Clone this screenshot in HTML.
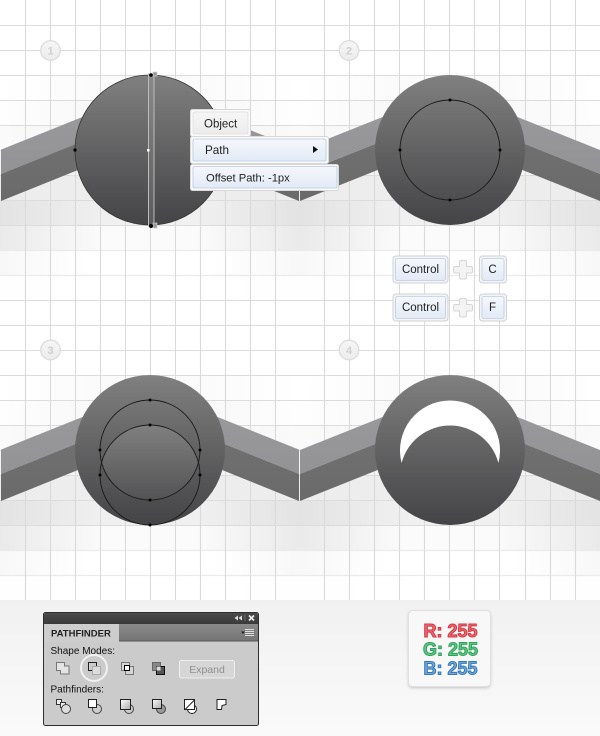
<!DOCTYPE html>
<html><head><meta charset="utf-8"><style>
html,body{margin:0;padding:0;width:600px;height:736px;overflow:hidden;background:#fff}
svg{display:block}
text{font-family:"Liberation Sans",sans-serif}
</style></head><body>
<svg width="600" height="736" viewBox="0 0 600 736" xmlns="http://www.w3.org/2000/svg">
<defs>
<linearGradient id="r1"><stop offset="0" stop-color="#fff"/><stop offset=".3" stop-color="#fbfbfb"/><stop offset=".7" stop-color="#fbfbfb"/><stop offset="1" stop-color="#fff"/></linearGradient>
<linearGradient id="r2"><stop offset="0" stop-color="#fefefe"/><stop offset=".25" stop-color="#f9f9f9"/><stop offset=".75" stop-color="#f9f9f9"/><stop offset="1" stop-color="#fefefe"/></linearGradient>
<linearGradient id="r3"><stop offset="0" stop-color="#fafafa"/><stop offset=".25" stop-color="#f6f6f6"/><stop offset=".75" stop-color="#f6f6f6"/><stop offset="1" stop-color="#fafafa"/></linearGradient>
<linearGradient id="r4"><stop offset="0" stop-color="#f4f4f4"/><stop offset="1" stop-color="#f4f4f4"/></linearGradient>
<linearGradient id="r5"><stop offset="0" stop-color="#ededed"/><stop offset="1" stop-color="#ededed"/></linearGradient>
<linearGradient id="r6"><stop offset="0" stop-color="#e3e3e3"/><stop offset=".35" stop-color="#f0f0f0"/><stop offset=".65" stop-color="#f0f0f0"/><stop offset="1" stop-color="#e3e3e3"/></linearGradient>
<linearGradient id="r7"><stop offset="0" stop-color="#eaeaea"/><stop offset=".35" stop-color="#fbfbfb"/><stop offset=".65" stop-color="#fbfbfb"/><stop offset="1" stop-color="#eaeaea"/></linearGradient>
<linearGradient id="r8"><stop offset="0" stop-color="#f8f8f8"/><stop offset=".3" stop-color="#fff"/><stop offset=".7" stop-color="#fff"/><stop offset="1" stop-color="#f8f8f8"/></linearGradient>
<linearGradient id="r9"><stop offset="0" stop-color="#fefefe"/><stop offset=".3" stop-color="#fff"/><stop offset=".7" stop-color="#fff"/><stop offset="1" stop-color="#fefefe"/></linearGradient>
<linearGradient id="ci" x1="0" y1="0" x2="0" y2="1"><stop offset="0" stop-color="#808080"/><stop offset="1" stop-color="#444446"/></linearGradient>
<linearGradient id="lt" x1="0" y1="0" x2="0" y2="1"><stop offset="0" stop-color="#9b9b9e"/><stop offset="1" stop-color="#939396"/></linearGradient>
<linearGradient id="dk" x1="0" y1="0" x2="0" y2="1"><stop offset="0" stop-color="#737373"/><stop offset="1" stop-color="#6a6a6a"/></linearGradient>
<linearGradient id="bar" x1="0" y1="0" x2="0" y2="1"><stop offset="0" stop-color="#8a8a8a"/><stop offset="1" stop-color="#5a5a5a"/></linearGradient>
<linearGradient id="bl" x1="0" y1="0" x2="0" y2="1"><stop offset="0" stop-color="#f5f8fc"/><stop offset="1" stop-color="#e2eaf6"/></linearGradient>
<linearGradient id="gr" x1="0" y1="0" x2="0" y2="1"><stop offset="0" stop-color="#f6f6f6"/><stop offset="1" stop-color="#ececec"/></linearGradient>
<linearGradient id="bot" x1="0" y1="0" x2="0" y2="1"><stop offset="0" stop-color="#f2f1f1"/><stop offset="1" stop-color="#fafafa"/></linearGradient>
<linearGradient id="ttl" x1="0" y1="0" x2="0" y2="1"><stop offset="0" stop-color="#4a4a4a"/><stop offset="1" stop-color="#3a3a3a"/></linearGradient>
<linearGradient id="tb" x1="0" y1="0" x2="0" y2="1"><stop offset="0" stop-color="#8a8a8a"/><stop offset="1" stop-color="#757575"/></linearGradient>
<linearGradient id="ic" x1="0" y1="0" x2="1" y2="1"><stop offset="0" stop-color="#fff"/><stop offset="1" stop-color="#aaa"/></linearGradient>
<linearGradient id="bd" x1="0" y1="0" x2="0" y2="1"><stop offset="0" stop-color="#f6f6f6"/><stop offset="1" stop-color="#ececec"/></linearGradient>
<filter id="sh" x="-20%" y="-20%" width="140%" height="140%"><feGaussianBlur stdDeviation="1.500"/></filter>
<clipPath id="lens"><circle cx="150" cy="450" r="50"/></clipPath>
<g id="bg">
<rect y="75" width="300" height="25" fill="url(#r1)"/>
<rect y="100" width="300" height="25" fill="url(#r2)"/>
<rect y="125" width="300" height="25" fill="url(#r3)"/>
<rect y="150" width="300" height="25" fill="url(#r4)"/>
<rect y="175" width="300" height="25" fill="url(#r5)"/>
<rect y="200" width="300" height="25" fill="url(#r6)"/>
<rect y="225" width="300" height="25" fill="url(#r7)"/>
<rect y="250" width="300" height="25" fill="url(#r8)"/>
<rect y="275" width="300" height="25" fill="url(#r9)"/>
</g>
<g id="rib">
<path d="M1 149.600 L150 90 L299 149.600 V174 L150 114 L1 174Z" fill="url(#lt)"/>
<path d="M1 174 L150 114 L299 174 V201 L150 141 L1 201Z" fill="url(#dk)"/>
</g>
<g id="rib2">
<path d="M0 150 L150 90 L300 150 V174 L150 114 L0 174Z" fill="url(#lt)"/>
<path d="M0 174 L150 114 L300 174 V201 L150 141 L0 201Z" fill="url(#dk)"/>
</g>
</defs>

<rect width="600" height="600" fill="#fff"/>
<use href="#bg"/><use href="#bg" x="300"/><use href="#bg" y="300"/><use href="#bg" x="300" y="300"/>

<g fill="none">
<path stroke="#dcdcdc" stroke-width="1.100" d="M0 25.500H600M0 50.500H600M0 75.500H600M0 100.500H600M0 125.500H600M0 150.500H600M0 175.500H600M0 200.500H600M0 225.500H600M0 300.500H600M0 325.500H600M0 350.500H600M0 375.500H600M0 400.500H600M0 425.500H600M0 450.500H600M0 475.500H600M0 500.500H600M0 525.500H600"/>
<path stroke="#ebebeb" stroke-width="1.200" d="M0 250.500H600M0 275.500H600M0 550.500H600M0 575.500H600"/>
<g stroke="#dadada" stroke-width="1.100">
<path d="M25.500 0V600M50.500 0V600M75.500 0V600M100.500 0V600M125.500 0V600M150.500 0V600M175.500 0V600M200.500 0V600M225.500 0V600M250.500 0V600M275.500 0V600"/>
<path d="M324.500 0V600M349.500 0V600M374.500 0V600M399.500 0V600M424.500 0V600M449.500 0V600M474.500 0V600M499.500 0V600M525.500 0V600M550.500 0V600M575.500 0V600"/>
</g>
</g>

<!-- ribbons -->
<use href="#rib"/><use href="#rib2" x="300"/><use href="#rib" y="300"/><use href="#rib2" x="300" y="300"/>

<!-- panel 1 -->
<circle cx="150" cy="150" r="75" fill="url(#ci)" stroke="#333" stroke-width=".8"/>
<rect x="148.500" y="74" width="5.500" height="152" fill="url(#bar)" stroke="#bbb" stroke-width="1"/>
<rect x="153" y="72" width="4" height="4" fill="#999" stroke="#ccc" stroke-width=".7"/>
<rect x="153" y="223" width="4" height="5" fill="#999" stroke="#ccc" stroke-width=".7"/>
<circle cx="151" cy="75" r="1.800" fill="#000"/><circle cx="151" cy="226" r="2" fill="#000"/>
<circle cx="75" cy="150" r="1.600" fill="#000"/>
<rect x="147" y="149" width="2.500" height="2.500" fill="#fff"/>

<!-- panel 2 -->
<circle cx="450" cy="150" r="75" fill="url(#ci)"/>
<circle cx="450" cy="150" r="50" fill="none" stroke="#1a1a1a" stroke-width=".9"/>
<g fill="#000"><circle cx="450" cy="100" r="1.500"/><circle cx="450" cy="200" r="1.500"/><circle cx="400" cy="150" r="1.500"/><circle cx="500" cy="150" r="1.500"/></g>

<!-- panel 3 -->
<circle cx="150" cy="450" r="75" fill="url(#ci)"/>
<g clip-path="url(#lens)"><circle cx="150" cy="475" r="50" fill="url(#ci)"/></g>
<circle cx="150" cy="450" r="50" fill="none" stroke="#1a1a1a" stroke-width=".9"/>
<circle cx="150" cy="475" r="50" fill="none" stroke="#1a1a1a" stroke-width=".9"/>
<g fill="#000"><circle cx="150" cy="400" r="1.500"/><circle cx="150" cy="425" r="1.500"/><circle cx="150" cy="500" r="1.500"/><circle cx="150" cy="525" r="1.500"/><circle cx="100" cy="450" r="1.500"/><circle cx="200" cy="450" r="1.500"/><circle cx="100" cy="475" r="1.500"/><circle cx="200" cy="475" r="1.500"/></g>

<!-- panel 4 -->
<circle cx="450" cy="450" r="75" fill="url(#ci)"/>
<path d="M401.600 463 A50 50 0 1 1 498.400 463 A50 50 0 0 0 401.600 463Z" fill="#fff"/>

<!-- badges -->
<g fill="url(#bd)" stroke="#dcdcdc" stroke-width="1.300">
<circle cx="50.500" cy="50.500" r="9.800"/><circle cx="349" cy="50.500" r="9.800"/><circle cx="50.500" cy="350" r="9.800"/><circle cx="349" cy="350" r="9.800"/>
</g>
<g fill="#cfcfcf" font-size="11" font-weight="bold" text-anchor="middle">
<text x="50.500" y="54.500">1</text><text x="349" y="54.500">2</text><text x="50.500" y="354">3</text><text x="349" y="354">4</text>
</g>

<!-- menu -->
<rect x="190.500" y="109.500" width="60" height="27" rx="2" fill="#fafafa" stroke="#d8d8d8"/>
<rect x="193" y="112" width="55" height="22" rx="1.500" fill="url(#gr)" stroke="#ddd" stroke-width=".7"/>
<text x="204" y="127.500" font-size="11.500" fill="#222">Object</text>
<rect x="190.500" y="136.500" width="138" height="27" rx="2" fill="#fafafa" stroke="#d8d8d8"/>
<rect x="193" y="139" width="133" height="22" rx="1.500" fill="url(#bl)" stroke="#b5c9e2" stroke-width=".8"/>
<text x="205" y="154" font-size="11.700" fill="#222">Path</text>
<path d="M313 146L318 149.500L313 153Z" fill="#111"/>
<rect x="190.500" y="164.500" width="148" height="26" rx="2" fill="#fafafa" stroke="#d8d8d8"/>
<rect x="193" y="166.500" width="144" height="21.500" rx="1.500" fill="url(#bl)" stroke="#b5c9e2" stroke-width=".8"/>
<text x="206" y="181.500" font-size="11.200" fill="#222">Offset Path: -1px</text>

<!-- keys -->
<g>
<rect x="393" y="256" width="55" height="27" rx="3" fill="#f4f4f4" stroke="#cfd2d6"/>
<rect x="395.500" y="258.500" width="50" height="22" rx="2" fill="url(#bl)" stroke="#bccde2" stroke-width=".8"/>
<text x="420.500" y="273" font-size="11.500" fill="#222" text-anchor="middle">Control</text>
<rect x="393" y="294" width="55" height="27" rx="3" fill="#f4f4f4" stroke="#cfd2d6"/>
<rect x="395.500" y="296.500" width="50" height="22" rx="2" fill="url(#bl)" stroke="#bccde2" stroke-width=".8"/>
<text x="420.500" y="311" font-size="11.500" fill="#222" text-anchor="middle">Control</text>
<rect x="479.500" y="256" width="27" height="27" rx="3" fill="#f4f4f4" stroke="#cfd2d6"/>
<rect x="482" y="258.500" width="22" height="22" rx="2" fill="url(#bl)" stroke="#bccde2" stroke-width=".8"/>
<text x="492.500" y="273" font-size="11.500" fill="#222" text-anchor="middle">C</text>
<rect x="479.500" y="294" width="27" height="27" rx="3" fill="#f4f4f4" stroke="#cfd2d6"/>
<rect x="482" y="296.500" width="22" height="22" rx="2" fill="url(#bl)" stroke="#bccde2" stroke-width=".8"/>
<text x="492.500" y="311" font-size="11.500" fill="#222" text-anchor="middle">F</text>
<path d="M461 260.500h4q1.500 0 1.500 1.500v4.500h4.500q1.500 0 1.500 1.500v3.500q0 1.500 -1.500 1.500h-4.500v4.500q0 1.500 -1.500 1.500h-4q-1.500 0 -1.500 -1.500v-4.500h-4.500q-1.500 0 -1.500 -1.500v-3.500q0 -1.500 1.500 -1.500h4.500v-4.500q0 -1.500 1.500 -1.500z" fill="#f3f3f3" stroke="#d6d6d6"/>
<path d="M461 298.500h4q1.500 0 1.500 1.500v4.500h4.500q1.500 0 1.500 1.500v3.500q0 1.500 -1.500 1.500h-4.500v4.500q0 1.500 -1.500 1.500h-4q-1.500 0 -1.500 -1.500v-4.500h-4.500q-1.500 0 -1.500 -1.500v-3.500q0 -1.500 1.500 -1.500h4.500v-4.500q0 -1.500 1.500 -1.500z" fill="#f3f3f3" stroke="#d6d6d6"/>
</g>

<!-- bottom -->
<rect y="600" width="600" height="136" fill="url(#bot)"/>

<!-- pathfinder -->
<rect x="43.500" y="612.500" width="215" height="113" rx="2" fill="#cbcbcb" stroke="#2e2e2e"/>
<path d="M44 624V614.500Q44 613 46 613H256Q258 613 258 615V624Z" fill="url(#ttl)"/>
<rect x="44" y="624" width="214" height="17" fill="url(#tb)"/>
<rect x="44" y="640.500" width="214" height="1" fill="#555"/>
<rect x="44" y="624" width="75" height="18" fill="#cdcdcd"/>
<text x="51" y="636.500" font-size="9.500" font-weight="bold" fill="#222">PATHFINDER</text>
<path d="M238 615.500L234.500 618L238 620.500ZM242 615.500L238.500 618L242 620.500Z" fill="#ddd"/>
<rect x="244.500" y="615" width=".8" height="6" fill="#777"/>
<path d="M249 615.500L254 620.500M254 615.500L249 620.500" stroke="#eee" stroke-width="1.600"/>
<path d="M241 631.500h4l-2 2.500z" fill="#222"/>
<path d="M245 629.500h9M245 631.500h9M245 633.500h9M245 635.500h9" stroke="#ddd" stroke-width="1"/>
<text x="50.500" y="654" font-size="10" fill="#111">Shape Modes:</text>
<text x="50.500" y="692.500" font-size="10" fill="#111">Pathfinders:</text>
<rect x="179.500" y="660.500" width="55" height="17.500" rx="2" fill="#d6d6d6" stroke="#eee"/>
<text x="207" y="673" font-size="10.500" fill="#8f8f8f" text-anchor="middle">Expand</text>
<circle cx="94" cy="668" r="13" fill="none" stroke="#f1f1f1" stroke-width="2"/>

<!-- shape mode icons -->
<g stroke-width="1" fill="#e4e4e4">
<path d="M56.500 662.500h8v3.500h4.500v8h-8.500v-3.500h-4z" stroke="#777"/>
<rect x="88.500" y="662.500" width="8" height="8" fill="#ccc" stroke="#222"/>
<rect x="92.500" y="666.500" width="8" height="8" fill="#dcdcdc" stroke="#aaa"/>
<rect x="121.500" y="662.500" width="8" height="8" fill="#d5d5d5" stroke="#777"/>
<rect x="125.500" y="666.500" width="8" height="8" fill="#d5d5d5" stroke="#777"/>
<rect x="124.500" y="665.500" width="5" height="5" fill="#fff" stroke="#000"/>
<rect x="152.500" y="662.500" width="8" height="8" fill="#888" stroke="#666"/>
<rect x="156.500" y="666.500" width="8" height="8" fill="#555" stroke="#111"/>
<rect x="156.500" y="666.500" width="4" height="4" fill="#ddd" stroke="none"/>
</g>
<!-- pathfinder icons -->
<g stroke-width="1">
<rect x="56.500" y="699.500" width="5" height="5" fill="#eee" stroke="#333"/>
<rect x="60.500" y="702.500" width="5" height="5" fill="#eee" stroke="#333"/>
<circle cx="66" cy="709" r="4.500" fill="#ddd" stroke="#444"/>
<circle cx="97" cy="709" r="4.500" fill="#ccc" stroke="#444"/>
<rect x="88.500" y="699.500" width="8" height="8" fill="#fff" stroke="#222"/>
<circle cx="129" cy="709" r="4.500" fill="#ccc" stroke="#444"/>
<rect x="120.500" y="699.500" width="10" height="10" fill="url(#ic)" stroke="#222"/>
<circle cx="161" cy="709" r="4.500" fill="#999" stroke="#444"/>
<rect x="152.500" y="699.500" width="9" height="9" fill="url(#ic)" stroke="#222"/>
<circle cx="192" cy="709" r="4.500" fill="#fff" stroke="#222"/>
<rect x="184.500" y="699.500" width="10" height="10" fill="#fff" stroke="#222"/>
<path d="M185 709.500L194.500 700" stroke="#222" fill="none"/>
<path d="M217 699.500H226V704.500L222 705.500L221.500 709.500H217Z" fill="#fff" stroke="#222"/>
</g>

<!-- RGB box -->
<rect x="408.500" y="612" width="82" height="76" rx="4" fill="#999" opacity=".55" filter="url(#sh)"/>
<rect x="408.500" y="610.500" width="82" height="76" rx="4" fill="#f8f8f8" stroke="#e0e0e0"/>
<g font-size="18" font-weight="bold" stroke-width="1">
<text x="423.500" y="637" fill="#ea6a72" stroke="#d93541">R: 255</text>
<text x="423" y="655.500" fill="#62c486" stroke="#2ca45a">G: 255</text>
<text x="423.500" y="674.500" fill="#74a9d8" stroke="#3478b8">B: 255</text>
</g>
</svg>
</body></html>
